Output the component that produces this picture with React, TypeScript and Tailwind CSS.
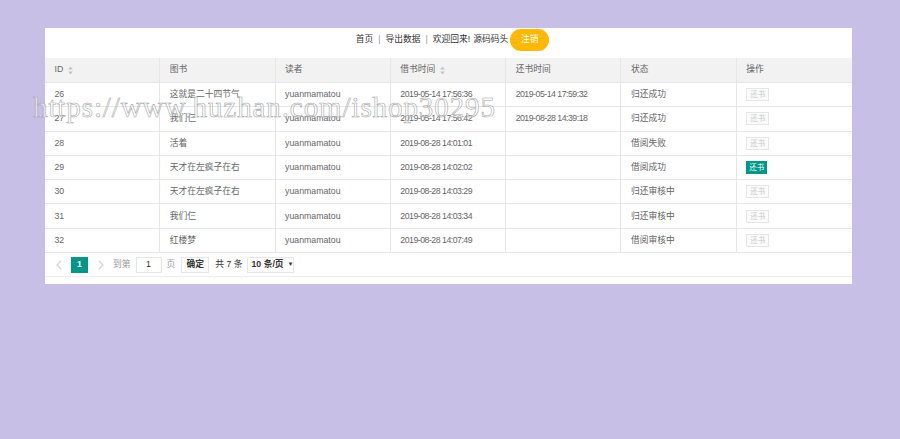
import React from "react"

const rows = [
  { id: 26, book: "这就是二十四节气", reader: "yuanmamatou", borrow: "2019-05-14 17:56:36", back: "2019-05-14 17:59:32", status: "归还成功", can: false },
  { id: 27, book: "我们仨", reader: "yuanmamatou", borrow: "2019-05-14 17:56:42", back: "2019-08-28 14:39:18", status: "归还成功", can: false },
  { id: 28, book: "活着", reader: "yuanmamatou", borrow: "2019-08-28 14:01:01", back: "", status: "借阅失败", can: false },
  { id: 29, book: "天才在左疯子在右", reader: "yuanmamatou", borrow: "2019-08-28 14:02:02", back: "", status: "借阅成功", can: true },
  { id: 30, book: "天才在左疯子在右", reader: "yuanmamatou", borrow: "2019-08-28 14:03:29", back: "", status: "归还审核中", can: false },
  { id: 31, book: "我们仨", reader: "yuanmamatou", borrow: "2019-08-28 14:03:34", back: "", status: "归还审核中", can: false },
  { id: 32, book: "红楼梦", reader: "yuanmamatou", borrow: "2019-08-28 14:07:49", back: "", status: "借阅审核中", can: false },
]

function SortIcon() {
  return (
    <svg width="5" height="9" viewBox="0 0 5 9" className="ml-[5px]">
      <path d="M2.5 0.5 L4.8 3.5 L0.2 3.5 Z" fill="#c2c2c2" />
      <path d="M2.5 8.5 L4.8 5.5 L0.2 5.5 Z" fill="#c2c2c2" />
    </svg>
  )
}

function Chevron({ dir }: { dir: "left" | "right" }) {
  return (
    <svg width="6" height="10" viewBox="0 0 6 10">
      <path
        d={dir === "left" ? "M5 1 L1 5 L5 9" : "M1 1 L5 5 L1 9"}
        fill="none"
        stroke="#d2d2d2"
        strokeWidth="1.2"
      />
    </svg>
  )
}

const cell = "flex items-center px-[9.5px] border-r border-b border-[#e6e6e6] whitespace-nowrap overflow-hidden"

export default function App() {
  return (
    <div
      className="relative min-h-[439px] bg-[#c8bfe7] pt-[28px] text-[8.75px] text-[#666]"
      style={{ fontFamily: '"Liberation Sans", "Noto Sans CJK SC", sans-serif' }}
    >
      <div className="ml-[45px] w-[807px] h-[256px] bg-white">
        {/* top bar */}
        <div className="h-[30px] pt-[1px] flex justify-center">
          <div className="flex items-center h-[22px] text-[#333] pl-[8px]">
            <span>首页</span>
            <span className="mx-[5px] text-[#999]">|</span>
            <span>导出数据</span>
            <span className="mx-[5px] text-[#999]">|</span>
            <span>欢迎回来!</span>
            <span className="ml-[3px]">源码码头</span>
            <button className="ml-[2px] h-[22px] w-[39px] rounded-full bg-[#ffb800] text-white text-[8.75px]">
              注销
            </button>
          </div>
        </div>

        {/* table */}
        <div className="grid grid-cols-7">
          <div className={`${cell} h-[25px] bg-[#f2f2f2]`}>ID<SortIcon /></div>
          <div className={`${cell} h-[25px] bg-[#f2f2f2]`}>图书</div>
          <div className={`${cell} h-[25px] bg-[#f2f2f2]`}>读者</div>
          <div className={`${cell} h-[25px] bg-[#f2f2f2]`}>借书时间<SortIcon /></div>
          <div className={`${cell} h-[25px] bg-[#f2f2f2]`}>还书时间</div>
          <div className={`${cell} h-[25px] bg-[#f2f2f2]`}>状态</div>
          <div className={`${cell} h-[25px] bg-[#f2f2f2] border-r-0`}>操作</div>
          {rows.map((r) => (
            <React.Fragment key={r.id}>
              <div className={`${cell} h-[24.3px]`}>{r.id}</div>
              <div className={`${cell} h-[24.3px]`}>{r.book}</div>
              <div className={`${cell} h-[24.3px]`}>{r.reader}</div>
              <div className={`${cell} h-[24.3px] tracking-[-0.5px]`}>{r.borrow}</div>
              <div className={`${cell} h-[24.3px] tracking-[-0.5px]`}>{r.back}</div>
              <div className={`${cell} h-[24.3px]`}>{r.status}</div>
              <div className={`${cell} h-[24.3px] border-r-0`}>
                {r.can ? (
                  <span className="h-[13px] px-[3px] leading-[13px] bg-[#009688] text-white text-[7.5px]">还书</span>
                ) : (
                  <span className="h-[13px] px-[3px] leading-[11px] border border-[#e6e6e6] bg-[#fbfbfb] text-[#c9c9c9] text-[7.5px]">
                    还书
                  </span>
                )}
              </div>
            </React.Fragment>
          ))}
        </div>

        {/* pagination */}
        <div className="h-[24px] flex items-center pl-[11px] border-b border-[#eeeeee] whitespace-nowrap">
          <Chevron dir="left" />
          <span className="ml-[9px] w-[17px] h-[16px] flex items-center justify-center bg-[#009688] text-white font-bold">
            1
          </span>
          <span className="ml-[10px]"><Chevron dir="right" /></span>
          <span className="ml-[9px] text-[#999]">到第</span>
          <span className="ml-[5px] w-[26px] h-[16px] border border-[#e6e6e6] flex items-center justify-center text-[#333]">
            1
          </span>
          <span className="ml-[5px] text-[#999]">页</span>
          <span className="ml-[6px] w-[28px] h-[16px] border border-[#e6e6e6] flex items-center justify-center text-[#333] font-bold">
            确定
          </span>
          <span className="ml-[6px] text-[#333]">共 7 条</span>
          <span className="ml-[5px] w-[47px] h-[16px] border border-[#e6e6e6] flex items-center pl-[3px] text-[#333] font-bold whitespace-nowrap">
            10 条/页
            <span className="ml-[4px] text-[6px]">▼</span>
          </span>
        </div>
      </div>

      {/* watermark */}
      <div
        className="absolute left-[33px] top-[93px] text-[29px] leading-none tracking-[0.9px] text-[rgba(255,255,255,0.5)] [-webkit-text-stroke:0.6px_#a8a8a8] pointer-events-none whitespace-nowrap"
        style={{ fontFamily: '"Liberation Serif", serif' }}
      >
        https://www.huzhan.com/ishop30295
      </div>
    </div>
  )
}
